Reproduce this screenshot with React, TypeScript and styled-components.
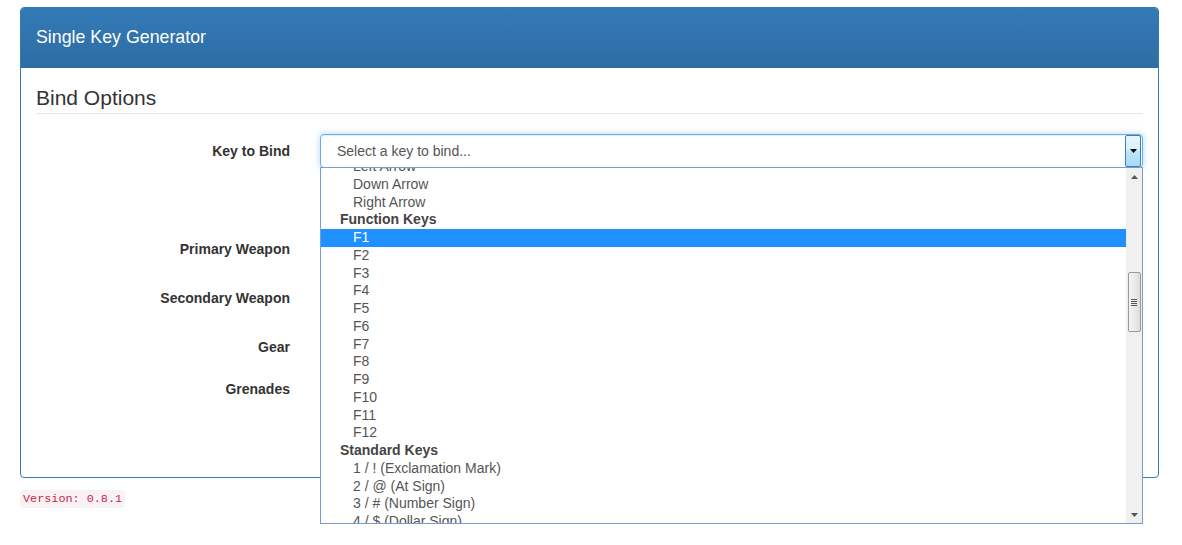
import React from "react";
import styled, { createGlobalStyle } from "styled-components";

const GlobalStyle = createGlobalStyle`
	html, body {
		margin: 0;
		padding: 0;
		background: #fff;
	}
	body {
		font-family: "Liberation Sans", Arial, sans-serif;
		font-size: 14px;
		color: #333;
	}
`;

const Page = styled.div`
	min-height: 545px;
	box-sizing: border-box;
	padding: 7px 23px 0 20px;
`;

const Panel = styled.div`
	border: 1px solid #337ab7;
	border-radius: 4px;
	background: #fff;
`;

const PanelHeading = styled.div`
	height: 59px;
	padding: 0 15px;
	display: flex;
	align-items: center;
	background: linear-gradient(to bottom, #337ab7 0%, #2e6da4 100%);
	border-bottom: 1px solid #2e6da4;
	border-radius: 3px 3px 0 0;
	color: #fff;
	font-size: 17.8px;
`;

const PanelBody = styled.div`
	padding: 15px;
`;

const Legend = styled.div`
	font-size: 21px;
	line-height: 30px;
	color: #333;
	border-bottom: 1px solid #e5e5e5;
	margin-bottom: 20px;
`;

const Row = styled.div<{ $h: number; $last?: boolean }>`
	display: grid;
	grid-template-columns: 254px 1fr;
	column-gap: 30px;
	height: ${(p) => p.$h}px;
	margin-bottom: ${(p) => (p.$last ? 0 : 15)}px;
`;

const Label = styled.label<{ $top?: number }>`
	text-align: right;
	font-weight: bold;
	padding-top: ${(p) => p.$top ?? 8}px;
	line-height: 20px;
`;

const Control = styled.div`
	position: relative;
`;

const SelectBox = styled.div<{ $focused?: boolean }>`
	height: 34px;
	box-sizing: border-box;
	border: 1px solid ${(p) => (p.$focused ? "#66afe9" : "#ccc")};
	border-radius: 4px;
	box-shadow: ${(p) =>
		p.$focused
			? "inset 0 1px 1px rgba(0,0,0,.075), 0 0 6px rgba(102,175,233,.5)"
			: "inset 0 1px 1px rgba(0,0,0,.075)"};
	display: flex;
	align-items: center;
	padding-left: 16px;
	color: #555;
	background: #fff;
`;

const SelectText = styled.span`
	flex: 1;
`;

const ArrowButton = styled.span`
	width: 14px;
	height: 30px;
	margin-right: 1px;
	border: 1px solid #3c7fb1;
	border-radius: 2px;
	background: linear-gradient(to bottom, #eaf6fd 0%, #d9f0fc 45%, #bee6fd 50%, #a7d9f5 100%);
	display: flex;
	align-items: center;
	justify-content: center;
`;

const Dropdown = styled.div`
	position: absolute;
	top: 33px;
	left: 0;
	right: 0;
	height: 357px;
	box-sizing: border-box;
	border: 1px solid #7a9ccf;
	background: #fff;
	display: flex;
	overflow: hidden;
	z-index: 10;
`;

const OptionList = styled.div`
	flex: 1;
	overflow: hidden;
`;

const OptionScroll = styled.div`
	margin-top: -10px;
`;

const Item = styled.div<{ $group?: boolean; $selected?: boolean }>`
	height: 17.75px;
	line-height: 17.75px;
	padding-left: ${(p) => (p.$group ? 19 : 32)}px;
	font-weight: ${(p) => (p.$group ? "bold" : "normal")};
	color: ${(p) => (p.$selected ? "#fff" : p.$group ? "#444" : "#555")};
	background: ${(p) => (p.$selected ? "#1e90ff" : "transparent")};
	white-space: nowrap;
`;

const ScrollTrack = styled.div`
	width: 16px;
	background: #f0f0f0;
	display: flex;
	flex-direction: column;
	align-items: center;
`;

const ScrollArrow = styled.div`
	height: 17px;
	display: flex;
	align-items: center;
	justify-content: center;
`;

const ScrollThumb = styled.div`
	width: 13px;
	height: 60px;
	margin-top: 87px;
	box-sizing: border-box;
	border: 1px solid #9a9a9a;
	border-radius: 2px;
	background: linear-gradient(to right, #f4f4f4 0%, #e8e8e8 60%, #dcdcdc 100%);
	display: flex;
	flex-direction: column;
	align-items: center;
	justify-content: center;
	gap: 1px;
`;

const Grip = styled.span`
	width: 6px;
	height: 1px;
	background: #555;
`;

const Spacer = styled.div`
	flex: 1;
`;

const Version = styled.code`
	display: inline-block;
	margin-top: 12px;
	padding: 0 3px;
	height: 18px;
	line-height: 19px;
	font-family: "Liberation Mono", "DejaVu Sans Mono", monospace;
	font-size: 11.8px;
	color: #c7254e;
	background: #f9f2f4;
	border-radius: 4px;
`;

type Entry = { text: string; group?: boolean; selected?: boolean };

const entries: Entry[] = [
	{ text: "Left Arrow" },
	{ text: "Down Arrow" },
	{ text: "Right Arrow" },
	{ text: "Function Keys", group: true },
	{ text: "F1", selected: true },
	...Array.from({ length: 11 }, (_, i) => ({ text: `F${i + 2}` })),
	{ text: "Standard Keys", group: true },
	{ text: "1 / ! (Exclamation Mark)" },
	{ text: "2 / @ (At Sign)" },
	{ text: "3 / # (Number Sign)" },
	{ text: "4 / $ (Dollar Sign)" },
	{ text: "5 / % (Percent Sign)" },
];

const Triangle = ({ up, color = "#000" }: { up?: boolean; color?: string }) => (
	<svg width="7" height="4" viewBox="0 0 7 4">
		<path d={up ? "M0 4 L3.5 0 L7 4 Z" : "M0 0 L7 0 L3.5 4 Z"} fill={color} />
	</svg>
);

export default function App() {
	return (
		<Page>
			<GlobalStyle />
			<Panel>
				<PanelHeading>Single Key Generator</PanelHeading>
				<PanelBody>
					<Legend>Bind Options</Legend>

					<Row $h={34}>
						<Label $top={7}>Key to Bind</Label>
						<Control>
							<SelectBox $focused>
								<SelectText>Select a key to bind...</SelectText>
								<ArrowButton>
									<Triangle />
								</ArrowButton>
							</SelectBox>
							<Dropdown>
								<OptionList>
									<OptionScroll>
										{entries.map((e) => (
											<Item key={e.text} $group={e.group} $selected={e.selected}>
												{e.text}
											</Item>
										))}
									</OptionScroll>
								</OptionList>
								<ScrollTrack>
									<ScrollArrow>
										<Triangle up color="#555" />
									</ScrollArrow>
									<ScrollThumb>
										<Grip />
										<Grip />
										<Grip />
										<Grip />
									</ScrollThumb>
									<Spacer />
									<ScrollArrow>
										<Triangle color="#555" />
									</ScrollArrow>
								</ScrollTrack>
							</Dropdown>
						</Control>
					</Row>

					<Row $h={33}>
						<span />
						<Control />
					</Row>

					<Row $h={34}>
						<Label>Primary Weapon</Label>
						<Control>
							<SelectBox />
						</Control>
					</Row>

					<Row $h={34}>
						<Label>Secondary Weapon</Label>
						<Control>
							<SelectBox />
						</Control>
					</Row>

					<Row $h={27}>
						<Label>Gear</Label>
						<Control />
					</Row>

					<Row $h={34}>
						<Label>Grenades</Label>
						<Control>
							<SelectBox />
						</Control>
					</Row>

					<Row $h={42} $last>
						<span />
						<Control />
					</Row>
				</PanelBody>
			</Panel>
			<Version>Version: 0.8.1</Version>
		</Page>
	);
}
